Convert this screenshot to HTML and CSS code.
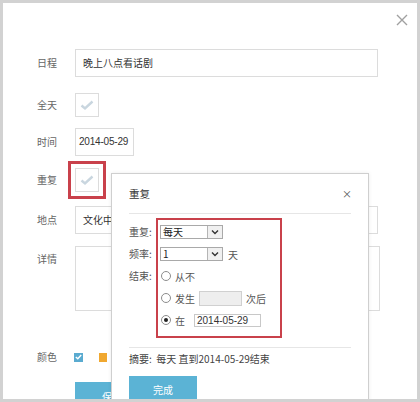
FILE: index.html
```html
<!DOCTYPE html>
<html lang="zh-CN">
  <head>
    <meta charset="UTF-8" />
    <meta name="viewport" content="width=device-width, initial-scale=1.0" />
    <title>日程</title>
    <link rel="stylesheet" href="styles.css">
  </head>
  <body>
    <div id="frame">
      <svg class="close" width="12" height="12" viewBox="0 0 12 12">
        <path d="M1 1 L11 11 M11 1 L1 11" stroke="#a0a0a0" stroke-width="1.4" fill="none" />
      </svg>

      <div id="form">
        <div class="row">
          <p class="label">日程</p>
          <div class="field wide">晚上八点看话剧</div>
        </div>
        <div class="row r-allday">
          <p class="label">全天</p>
          <div class="check">
            <svg width="14" height="12" viewBox="0 0 14 12"><path d="M1.5 6.5 L5 9.5 L12.5 2.5" stroke="#c9d6df" stroke-width="2.4" fill="none" /></svg>
          </div>
        </div>
        <div class="row r-time">
          <p class="label">时间</p>
          <div class="field date">2014-05-29</div>
        </div>
        <div class="row">
          <p class="label">重复</p>
          <div class="check marked">
            <svg width="14" height="12" viewBox="0 0 14 12"><path d="M1.5 6.5 L5 9.5 L12.5 2.5" stroke="#c9d6df" stroke-width="2.4" fill="none" /></svg>
          </div>
        </div>
        <div class="row r-place">
          <p class="label">地点</p>
          <div class="field wide">文化中心</div>
        </div>
        <div class="row top">
          <p class="label">详情</p>
          <div class="field area"></div>
        </div>
        <div class="row r-color">
          <p class="label">颜色</p>
          <div class="swatches">
            <span class="swatch blue">
              <svg width="7" height="6" viewBox="0 0 7 6"><path d="M0.8 3 L2.8 4.8 L6.2 1" stroke="#fff" stroke-width="1.4" fill="none" /></svg>
            </span>
            <span class="swatch orange"></span>
          </div>
        </div>
        <div class="row r-buttons">
          <p class="label"></p>
          <button class="btn save">保存</button>
        </div>
      </div>

      <div id="repeat-popup">
        <div class="popup-head">
          <p class="popup-title">重复</p>
          <span class="popup-close">×</span>
        </div>

        <div class="rules">
          <p class="rule-label">重复:</p>
          <div class="rule">
            <div class="select"><span>每天</span><i class="arrow"><svg width="8" height="6" viewBox="0 0 8 6"><path d="M1 1.5 L4 4.5 L7 1.5" stroke="#333" stroke-width="1.4" fill="none" /></svg></i></div>
          </div>

          <p class="rule-label">频率:</p>
          <div class="rule">
            <div class="select"><span>1</span><i class="arrow"><svg width="8" height="6" viewBox="0 0 8 6"><path d="M1 1.5 L4 4.5 L7 1.5" stroke="#333" stroke-width="1.4" fill="none" /></svg></i></div>
            <span class="unit">天</span>
          </div>

          <p class="rule-label">结束:</p>
          <div class="rule">
            <span class="radio"></span><span>从不</span>
          </div>

          <p class="rule-label"></p>
          <div class="rule">
            <span class="radio"></span><span>发生</span>
            <span class="count"></span>
            <span>次后</span>
          </div>

          <p class="rule-label"></p>
          <div class="rule">
            <span class="radio on"></span><span>在</span>
            <span class="until">2014-05-29</span>
          </div>
        </div>

        <p class="summary">摘要:&nbsp;&nbsp;每天 直到2014-05-29结束</p>
        <button class="btn done">完成</button>
      </div>
    </div>
  </body>
</html>
```

FILE: styles.css
```css
* {
  margin: 0;
  padding: 0;
  box-sizing: border-box;
}

body {
  font-family: "Noto Sans CJK SC", "Liberation Sans", sans-serif;
  font-size: 10px;
  color: #333;
  background-color: #fff;
}

#frame {
  position: relative;
  width: 420px;
  height: 402px;
  border: 3px solid #d2d2d2;
  background-color: #fff;
  overflow: hidden;
}

.close {
  position: absolute;
  top: 11px;
  right: 9px;
}

#form {
  display: flex;
  flex-direction: column;
  gap: 12px;
  padding: 46px 0 0 34px;
}

.row {
  display: flex;
  align-items: center;
}

.row.top {
  align-items: flex-start;
}

.row.top .label {
  padding-top: 6px;
}

.r-allday {
  margin-top: 4px;
}

.r-time {
  margin-top: -1px;
}

.r-place {
  margin-top: 2px;
}

.r-color {
  margin-top: 27px;
}

.r-buttons {
  margin-top: 6px;
}

.label {
  width: 38px;
  line-height: 14px;
  color: #666;
}

.field {
  height: 28px;
  line-height: 26px;
  padding: 0 7px;
  border: 1px solid #dcdcdc;
  background-color: #fff;
  white-space: nowrap;
  overflow: hidden;
}

.wide {
  width: 303px;
}

.date {
  width: 59px;
  padding: 0 3px;
  font-family: "Liberation Sans", sans-serif;
  letter-spacing: -0.2px;
}

.area {
  width: 305px;
  height: 65px;
}

.check {
  width: 24px;
  height: 24px;
  border: 1px solid #dcdcdc;
  display: flex;
  align-items: center;
  justify-content: center;
}

.check.marked {
  outline: 3px solid #c9414b;
  outline-offset: 4px;
}

.swatches {
  display: flex;
  gap: 16px;
  margin-left: -1px;
}

.swatch {
  width: 8px;
  height: 9px;
  display: flex;
  align-items: center;
  justify-content: center;
}

.swatch.blue {
  width: 9px;
  background-color: #5aabd0;
}

.swatch.orange {
  background-color: #f0a830;
}

.btn {
  border: none;
  color: #fff;
  background-color: #5bb3d5;
  font-family: "Noto Sans CJK SC", sans-serif;
  font-size: 10px;
}

.save {
  width: 74px;
  height: 28px;
}

/* repeat popup, lies over the form */
#repeat-popup {
  position: absolute;
  left: 108px;
  top: 170px;
  width: 258px;
  height: 240px;
  padding: 0 17px;
  background-color: #fff;
  border: 1px solid #cfcfcf;
  box-shadow: 0 0 4px rgba(0, 0, 0, 0.08);
}

.popup-head {
  height: 40px;
  display: flex;
  justify-content: space-between;
  align-items: center;
  border-bottom: 1px solid #e6e6e6;
}

.popup-title {
  font-size: 10.5px;
  color: #333;
}

.popup-close {
  font-size: 10px;
  color: #555;
  margin-right: -1px;
}

.rules {
  display: grid;
  grid-template-columns: 31px auto;
  grid-template-rows: repeat(5, 22px);
  margin-top: 7px;
}

.rules::after {
  content: "";
  grid-column: 2;
  grid-row: 1 / -1;
  width: 122px;
  margin: -3px 0 -7px -4px;
  border: 2px solid #c9414b;
  pointer-events: none;
}

.rule-label {
  grid-column: 1;
  line-height: 22px;
  color: #555;
}

.rule {
  grid-column: 2;
  display: flex;
  align-items: center;
  gap: 2px;
  color: #555;
}

.rules > .rule:nth-of-type(1) { grid-row: 1; }
.rules > .rule:nth-of-type(2) { grid-row: 2; }
.rules > .rule:nth-of-type(3) { grid-row: 3; }
.rules > .rule:nth-of-type(4) { grid-row: 4; }
.rules > .rule:nth-of-type(5) { grid-row: 5; }

.select {
  width: 63px;
  height: 14px;
  border: 1px solid #a9a9a9;
  display: flex;
  justify-content: space-between;
  color: #222;
}

.select span {
  line-height: 12px;
  padding-left: 2px;
}

.arrow {
  width: 15px;
  height: 100%;
  border-left: 1px solid #b5b5b5;
  background-color: #f0f0f0;
  display: flex;
  align-items: center;
  justify-content: center;
}

.unit {
  margin-left: 3px;
}

.radio {
  width: 10px;
  height: 10px;
  border: 1px solid #8c8c8c;
  border-radius: 50%;
  margin: 0 2px 0 1px;
  display: flex;
  align-items: center;
  justify-content: center;
}

.radio.on::after {
  content: "";
  width: 4px;
  height: 4px;
  border-radius: 50%;
  background-color: #222;
}

.count {
  width: 43px;
  height: 15px;
  margin: 0 2px;
  border: 1px solid #d0d0d0;
  background-color: #eeeeee;
}

.until {
  width: 67px;
  height: 13px;
  line-height: 11px;
  margin-left: 7px;
  padding-left: 2px;
  border: 1px solid #c8c8c8;
  font-family: "Liberation Sans", sans-serif;
  color: #333;
}

.summary {
  margin-top: 16px;
  padding-top: 4px;
  line-height: 14px;
  border-top: 1px solid #e6e6e6;
  color: #444;
}

.done {
  margin-top: 10px;
  width: 68px;
  height: 26px;
}
```
